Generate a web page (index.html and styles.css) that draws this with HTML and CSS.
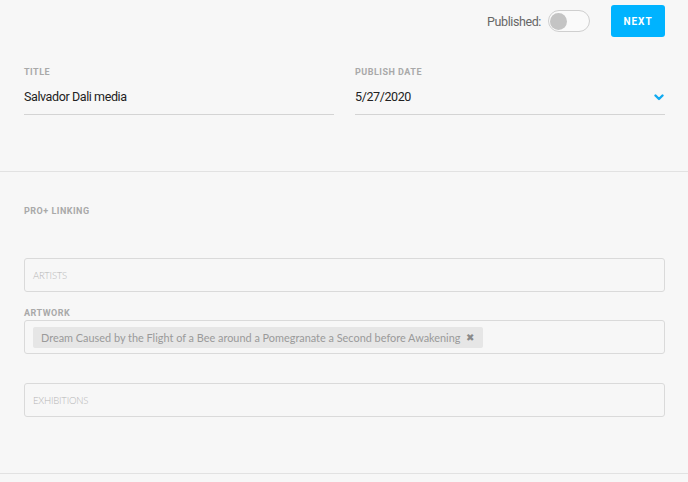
FILE: index.html
```html
<!DOCTYPE html>
<html lang="en">
<head>
    <meta charset="UTF-8">
    <meta name="viewport" content="width=device-width, initial-scale=1.0">
    <title>Media Details</title>
    <link rel="stylesheet" href="styles.css">
</head>
<body>

<!-- Top bar: publish toggle + next -->
<div class="topbar">
    <span class="published-label">Published:</span>
    <div class="toggle"><span class="knob"></span></div>
    <button type="button" class="next-btn">NEXT</button>
</div>

<!-- Basic fields -->
<div class="section fields">
    <div class="field">
        <div class="field-label">TITLE</div>
        <div class="field-value">Salvador Dali media</div>
    </div>
    <div class="field">
        <div class="field-label">PUBLISH DATE</div>
        <div class="field-value">
            <span>5/27/2020</span>
            <svg class="chevron" width="10" height="7" viewBox="0 0 10 7">
                <path d="M1.5 1.5 L5 5 L8.5 1.5" fill="none" stroke="#10aaf0" stroke-width="2.4" stroke-linecap="round" stroke-linejoin="round"/>
            </svg>
        </div>
    </div>
</div>

<!-- Pro+ linking -->
<div class="section linking">
    <div class="field-label">PRO+ LINKING</div>

    <div class="link-box artists">
        <span class="placeholder">ARTISTS</span>
    </div>

    <div class="field-label artwork-label">ARTWORK</div>
    <div class="link-box">
        <span class="chip">
            Dream Caused by the Flight of a Bee around a Pomegranate a Second before Awakening
            <span class="chip-x">&#10006;</span>
        </span>
    </div>

    <div class="link-box exhibitions">
        <span class="placeholder">EXHIBITIONS</span>
    </div>
</div>

</body>
</html>
```

FILE: styles.css
```css
body {
    margin: 0;
    background: #f7f7f7;
    font-family: 'Roboto', 'Liberation Sans', sans-serif;
    color: #222;
}

.topbar {
    display: flex;
    justify-content: flex-end;
    align-items: center;
    padding: 5px 23px 0 0;
    height: 32px;
}

.published-label {
    font-size: 12.5px;
    letter-spacing: -0.4px;
    color: #666;
    margin-right: 7px;
}

.toggle {
    width: 42px;
    height: 22px;
    box-sizing: border-box;
    border: 1px solid #cfcfcf;
    border-radius: 11px;
    background: #fafafa;
    display: flex;
    align-items: center;
    padding-left: 1px;
}

.knob {
    width: 17px;
    height: 17px;
    border-radius: 50%;
    background: #c4c4c4;
}

.next-btn {
    margin-left: 21px;
    width: 54px;
    height: 32px;
    border: none;
    border-radius: 3px;
    background: #00b3ff;
    color: #fff;
    font-family: 'Roboto', sans-serif;
    font-size: 10px;
    font-weight: 700;
    letter-spacing: 1px;
    padding: 0;
}

.section {
    border-bottom: 1px solid #e2e2e2;
    padding-left: 24px;
    padding-right: 23px;
}

.fields {
    display: grid;
    grid-template-columns: 1fr 1fr;
    gap: 21px;
    padding-top: 30px;
    padding-bottom: 56px;
}

.field-label {
    font-size: 9px;
    line-height: 11px;
    font-weight: 700;
    letter-spacing: 0.5px;
    color: #a9a9a9;
}

.field-value {
    display: flex;
    justify-content: space-between;
    align-items: center;
    font-size: 12.5px;
    letter-spacing: -0.4px;
    line-height: 16px;
    padding: 11px 0 9px;
    border-bottom: 1px solid #d4d4d4;
}

.chevron {
    margin-right: 1px;
}

.linking {
    padding-top: 34px;
    padding-bottom: 56px;
}

.link-box {
    box-sizing: border-box;
    height: 34px;
    border: 1px solid #dadada;
    border-radius: 3px;
    padding: 0 8px;
    display: flex;
    align-items: center;
}

.artists {
    margin-top: 41px;
}

.artwork-label {
    margin-top: 16px;
    margin-bottom: 1px;
}

.exhibitions {
    margin-top: 29px;
}

.placeholder {
    font-family: 'Lato', sans-serif;
    font-weight: 300;
    font-size: 9.5px;
    letter-spacing: -0.2px;
    color: #b5b5b5;
}

.chip {
    display: inline-flex;
    align-items: center;
    height: 21px;
    background: #e6e6e6;
    border-radius: 2px;
    padding: 0 9px 0 8px;
    font-family: 'Lato', sans-serif;
    font-size: 10.9px;
    color: #9a9a9a;
}

.chip-x {
    margin-left: 6px;
    font-size: 10px;
    color: #8a8a8a;
}
```
